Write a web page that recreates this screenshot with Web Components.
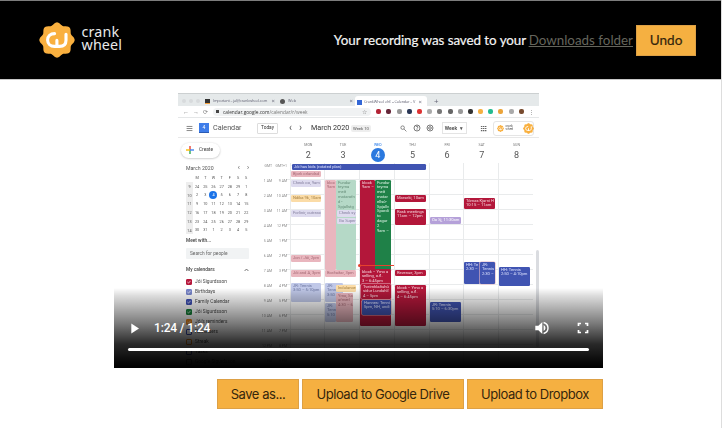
<!DOCTYPE html>
<html lang="en">
<head>
<meta charset="utf-8">
<title>CrankWheel recording</title>
<style>
html,body{margin:0;height:428px;overflow:hidden;background:#fff}
body{font-family:Lato,sans-serif}
</style>
</head>
<body>
<recording-page></recording-page>
<script>
const define=(name,html)=>customElements.define(name,class extends HTMLElement{
  connectedCallback(){
    if(this.shadowRoot)return;
    const r=this.attachShadow({mode:'open'});
    r.innerHTML=typeof html==='function'?html(this):html;
  }
});

/* Eight-lobed wheel outline */
const gear=(()=>{let d='';for(let i=0;i<=160;i++){const a=i/160*2*Math.PI,c=Math.cos(8*a);
  const r=16.4+1.25*c;d+=(i?'L':'M')+(18+r*Math.sin(a)).toFixed(2)+' '+(18-r*Math.cos(a)).toFixed(2);}return d+'Z';})();
const wheel=(s)=>`<svg width="${s}" height="${s}" viewBox="0 0 36 36"><path d="${gear}" fill="#f9b03f"/><path d="M15.6 11.6C11.4 11.7 8.6 14.4 8.6 18S11.5 24.4 15.5 24.4H20.5C24.8 24.4 27 22 27 18.3V12.2M17.9 18.4V24" fill="none" stroke="#fff" stroke-width="3.1" stroke-linecap="round" stroke-linejoin="round"/></svg>`;

define('brand-logo',`<style>:host{display:flex;align-items:center;gap:6.5px;color:#e9e9e9;margin-top:-1px}
 svg{display:block}.n{font:14.3px/12.6px "Noto Sans",sans-serif;letter-spacing:.15px;margin-top:-2px}.n span{display:block}</style>
 ${wheel(36)}<div class="n"><span>crank</span><span>wheel</span></div>`);

define('action-button',`<style>:host{display:flex;box-sizing:border-box;align-items:center;justify-content:center;background:#f5b041;border:1px solid #dda045;color:#35260c;font-size:14px;white-space:nowrap;height:30px;width:var(--w)}</style><slot></slot>`);

define('top-bar',`<style>:host{display:flex;box-sizing:border-box;height:80px;background:#000;border-top:1px solid #7c7c7c;border-bottom:1px solid #c8c8c8;align-items:center;justify-content:space-between;padding:0 25px 0 39px}
 .r{display:flex;align-items:center;color:#f4f4f4;font:13.4px/20px Lato,sans-serif;white-space:nowrap;-webkit-text-stroke:.2px}
 .r span{letter-spacing:-.05px}a{color:#65655c;text-decoration:underline;margin:0 3px 0 2.5px;-webkit-text-stroke:0}
 action-button{--w:60px;height:31px;font-size:13.6px}</style>
 <brand-logo></brand-logo><div class="r"><span>Your recording was saved to your</span><a>Downloads folder</a><action-button>Undo</action-button></div>`);

define('browser-tabs',`<style>:host{display:grid;grid-template-columns:27px 75px 77px 77px 1fr;height:13px;background:#e5e9ea;font:3.9px/12px "Open Sans",sans-serif;color:#667;border-top:1px solid #ccd0d1;box-sizing:border-box;white-space:nowrap}
 div{display:flex;align-items:center;gap:3px}i,.x{flex:none}.dots{padding-left:4px;gap:3px}.dots i{width:4px;height:4px;border-radius:50%;background:#d7dadc}
 .f{width:5px;height:5px;background:#333;border-bottom:1px solid #f7a13a;box-sizing:border-box}.g{width:5px;height:5px;border-radius:50%;background:#555}.c{background:#3367d6;border:0}.x{margin-left:auto;margin-right:4px;font-size:6px}.i{letter-spacing:-.18px}.i+.x{margin-right:5px}
 .on{background:#fff;border-radius:3px 3px 0 0;padding:0 0 0 2px;margin-top:2px;margin-left:-2px;width:72px;box-sizing:border-box;gap:2px}.p{font-size:8px}</style>
 <div class="dots"><i></i><i></i><i></i></div><div><i class="f"></i><span class="i">Important – jal@crankwheel.com</span><span class="x">×</span></div><div><i class="g"></i><span>Web</span><span class="x">×</span></div><div class="on"><i class="f c"></i><span class="i">CrankWheel ehf. – Calendar – V</span><span class="x">×</span></div><div class="p">+</div>`);

define('browser-bar',`<style>:host{display:flex;align-items:center;height:12px;padding:0 5px;font:4.8px/10px "Open Sans",sans-serif;color:#777;box-sizing:border-box;border-bottom:1px solid #e5e7e8;white-space:nowrap}
 .n{font-size:6px;width:25px;display:flex;justify-content:space-between;margin-right:5px}.u{background:#f0f2f3;height:8px;line-height:8px;border-radius:4px;flex:1;display:flex;align-items:center;padding:0 4px 0 3px;gap:4px;margin-right:5px}
 b{color:#333;font-weight:400}.u i{width:3px;height:3.5px;background:#444}.s{margin-left:auto;font-size:6px}
 .e{display:flex;gap:5.2px;align-items:center}.e i{width:5px;height:5px;border-radius:40%;background:var(--c)}</style>
 <div class="n"><span>←</span><span>→</span><span>⟳</span></div><div class="u"><i></i><span><b>calendar.google.com</b>/calendar/r/week</span><span class="s">☆</span></div>
 <div class="e">${['#b32335','#652638','#999','#293756','#d33','#aaa','#777','#666','#999','#333','#f5b041','#24bb91','#eba43a','#aaa','#784b2f'].map(c=>`<i style="--c:${c}"></i>`).join('')}<span>⋮</span></div>`);

const ic=(d,s=8)=>`<svg width="${s}" height="${s}" viewBox="0 0 24 24" fill="none" stroke="#666" stroke-width="2.6">${d}</svg>`;
define('calendar-header',`<style>:host{display:grid;grid-template-columns:21px 61px 27px 24px 42px 47px 41.5px 38px 13px 1fr;align-items:center;height:20px;box-sizing:border-box;border-bottom:1px solid #e8e8e8;font:7.2px/20px Roboto,sans-serif;color:#555;white-space:nowrap}
 svg{display:block;flex:none}div{display:flex;align-items:center}.m{padding-left:7.5px}.l{gap:4px}
 .t{border:1px solid #ddd;border-radius:1px;font-size:4.8px;line-height:10px;height:9px;width:19px;justify-content:center;color:#333;justify-self:start;margin-left:-3px}
 .a{gap:7px;font-size:10px;padding-left:2px}.mo{font-size:7.2px;color:#333}.w{background:#eee;border-radius:2px;font-size:4.2px;line-height:7px;justify-self:start;padding:0 2px;margin-left:-2px}
 .q{gap:5.5px}.k{border:1px solid #e4e4e4;width:23px;height:10px;font-size:5px;font-weight:700;justify-content:center;gap:3px}
 .b{border:1px solid #e5e5e5;border-radius:3px;height:15px;width:41px;gap:2px;font-size:3px;line-height:3px;box-sizing:border-box;padding-left:3px}.b svg:last-child{margin-left:8px}
 .lg{width:10px;height:10px;background:#3f7de9;border-bottom:1px solid #2b5bb4;box-sizing:border-box;color:#fff;font-size:5px;line-height:9px;justify-content:center}</style>
 <div class="m">${ic('<path d="M2 5H22M2 12H22M2 19H22"/>',7)}</div><div class="l"><div class="lg">4</div><span>Calendar</span></div><div class="t">Today</div><div class="a"><span>‹</span><span>›</span></div><div class="mo">March 2020</div><div class="w">Week 10</div>
 <div class="q">${ic('<circle cx="9" cy="9" r="6"/><path d="M14 14L22 22"/>',7)}${ic('<circle cx="12" cy="12" r="9"/><path d="M8.5 9C9 6 15 6 15 9S12 11 12 14M12 16V18"/>')}${ic('<circle cx="12" cy="12" r="9"/><circle cx="12" cy="12" r="4"/>')}</div>
 <div class="k">Week <span>▾</span></div><div>${ic('<path d="M3 5H8M10 5H15M17 5H22M3 12H8M10 12H15M17 12H22M3 19H8M10 19H15M17 19H22" stroke-width="4"/>',7)}</div><div class="b">${wheel(7)}<span>crank<br>wheel</span>${wheel(11)}</div>`);

define('mini-month',()=>{
 const rows=[['','M','T','W','T','F','S','S'],[9,24,25,26,27,28,29,1],[10,2,3,4,5,6,7,8],[11,9,10,11,12,13,14,15],[12,16,17,18,19,20,21,22],[13,23,24,25,26,27,28,29],[14,30,31,1,2,3,4,5]];
 return `<style>:host{display:block;font:3.8px/9px Roboto,sans-serif;color:#555}
 .h{display:flex;justify-content:space-between;font-size:5.2px;line-height:8px;height:9.5px;width:63px}.h div{display:flex;gap:7px;font-size:7px}
 .g{display:grid;grid-template-columns:7px repeat(7,8.2px);grid-auto-rows:8.75px;text-align:center;align-items:center}.g :nth-child(8n+1):not(:first-child){background:#eee;height:100%}
 .on{background:#1a73e8;color:#fff;border-radius:50%;width:8px;height:8px;line-height:8px;justify-self:center}</style>
 <div class="h"><span>March 2020</span><div><span>‹</span><span>›</span></div></div><div class="g">${rows.map((r,y)=>r.map((c,x)=>`<span${y==2&&x==3?' class="on"':''}>${c}</span>`).join('')).join('')}</div>`;});

define('calendar-side',()=>{
 const items=[['Jói Sigurdsson','#b6183c',1],['Birthdays','#7986cb',1],['Family Calendar','#3f51b5',1],['Jói Sigurdsson','#17843b',1],["Jói's reminders",'#ef8b20',1],['Reminders','#3f51b5',0],['Streak','#ef8b20',0],['Tasks','#3f51b5',0],['Google Sigurdsson','#777',0]];
 return `<style>:host{display:block;padding:4.5px 0 0 8px;font:4.8px/8px Roboto,sans-serif;color:#444;box-sizing:border-box;white-space:nowrap}
 .c{display:flex;align-items:center;gap:5px;width:39px;height:15px;box-sizing:border-box;border-radius:8px;box-shadow:0 .5px 2px #bbb;margin:0 0 6px -5px;padding-left:5px}
 .m{font-weight:500;margin-top:2.5px}.s{background:#f1f3f4;border-radius:1px;height:11px;line-height:11px;width:63px;padding-left:4px;box-sizing:border-box;margin-top:3px;color:#666}
 .h{display:flex;justify-content:space-between;width:63px;margin-top:7.5px;font-weight:500}.l{display:flex;gap:3.5px;height:10px;align-items:center}
 .l i{box-sizing:border-box;width:5.6px;height:5.6px;border:1px solid var(--c);border-radius:1px}.l i.on{background:var(--c)}svg{display:block}
 .ls{margin-top:2.5px}.up{margin-top:2px}</style>
 <div class="c"><svg width="8" height="8" viewBox="0 0 8 8"><path d="M4 0V4" stroke="#ea4335" stroke-width="1.4"/><path d="M4 4V8" stroke="#34a853" stroke-width="1.4"/><path d="M0 4H4" stroke="#fbbc04" stroke-width="1.4"/><path d="M4 4H8" stroke="#4285f4" stroke-width="1.4"/></svg>Create</div>
 <mini-month></mini-month><div class="m">Meet with...</div><div class="s">Search for people</div><div class="h"><span>My calendars</span><svg class="up" width="5" height="4" viewBox="0 0 5 4"><path d="M.6 3L2.5 1L4.4 3" fill="none" stroke="#555" stroke-width=".8"/></svg></div>
 <div class="ls">${items.map(([t,c,o])=>`<div class="l"><i class="${o?'on':''}" style="--c:${c}">${o?'<svg width="4" height="4" viewBox="0 0 4 4"><path d="M.4 2L1.5 3.1L3.6 .8" fill="none" stroke="#fff" stroke-width=".7"/></svg>':''}</i>${t}</div>`).join('')}</div>`;});

define('calendar-event',`<style>:host{display:block;box-sizing:border-box;overflow:hidden;border-radius:1.2px;padding:.6px 0 0 2px;font:4.1px/4.8px Roboto,sans-serif;white-space:nowrap;color:var(--ink,#fff);background:var(--c)}</style><slot></slot>`);

/* Event: left, top, width, height, colour key, text. The origin is the corner of the week grid. */
const C={r:['#b3173a','#f3d5dc'],g:['#1f8148','#dff5e7'],b:['#4054b2','#dfe4ff'],p:['#e9b6be','#a36873'],l:['#dedbef','#85809f'],o:['#fbdca7','#a27e42'],n:['#b5d9c7','#648c77'],v:['#b5a1d9','#fff'],u:['#c0c8e8','#69739d']};
const EV=[[25,1,134,6,'b','Jói has kids (rotated plan)'],[24,8,30,6,'p','Bjork orlandsd'],[24,17,30,7,'l','Check oo, 9am'],[24,32,30,7,'o','Ndika 9k, 10am'],[24,47,30,7,'l','Forlinir, outreac'],[24,92,30,7,'p','Jon / Jói, 2pm'],
[58,17,11,90,'p','bloc<br>9am'],[69,17,20,90,'n','Fundur<br>teyma<br>með<br>matarofn<br>d -<br>Spjallstg'],[70,47,19,7,'l','Check sy'],[70,55,19,6,'l','Go Super'],
[93,17,15,90,'r','block<br>9am –'],[108,17,16,90,'g','Fundur<br>teyma<br>með<br>matar<br>ellsú-<br>Spjallv<br>Spordi<br>to<br>dagur<br>2<br>9am –'],
[128,32,31,7,'r','Marseki, 10am'],[128,46,31,16,'r','Rask meetings<br>11am – 12pm'],[163,54,31,7,'v','Oo Sj, 11:30am'],[197,35,31,11,'r','Tómas Kjarni H<br>10:15 – 11am'],
[197,99,16,22,'b','HH: Te<br>2:30 –'],[213,99,15,22,'b','JR:<br>Tennis<br>2:30 –'],[232,104,31,19,'b','HH: Tennis<br>2:50 – 4:10pm'],
[24,107,30,7,'p','Jói and A, 3pm'],[58,107,31,7,'p','Borðaðar, 3pm'],[93,106,31,57,'r','block – Ymo a<br>selling, o.fl.<br>3 – 6:45pm'],[128,107,31,6,'r','Revenue, 3pm'],
[24,120,30,19,'u','JR: Tennis<br>3:50 – 5:10pm'],[58,120,18,19,'u','JR:<br>Tenn<br>3:50'],[69,122,20,7,'o','Indulance'],[58,140,11,19,'u','JR:<br>Tenn<br>5:10'],[69,130,17,29,'p','Ymo, Sa<br>afmæl<br>4:30 – 6'],
[94,121,30,15,'r','Tveimhlaðuhú<br>sidur Lundahlí<br>4 – 5pm'],[95,137,29,15,'b','Hannes: Tenni<br>5pm, NH, undi'],[128,122,31,41,'r','block – Ymo a<br>selling, o.fl.<br>4 – 6:45pm'],[163,139,31,20,'b','JR: Tennis<br>5:10 – 6:30pm']];
define('week-days',()=>`<style>:host{display:grid;grid-template-columns:24px repeat(7,34.7px);height:29px;padding-top:5px;box-sizing:border-box;text-align:center;font:3.6px/5px Roboto,sans-serif;color:#777}
 div{display:flex;flex-direction:column;align-items:center}b{font:9px/14px Roboto,sans-serif;color:#555;width:14px;height:14px;border-radius:50%}.on{color:#1a73e8}.on b{background:#2b79df;color:#fff}</style><i></i>${['MON','TUE','WED','THU','FRI','SAT','SUN'].map((d,i)=>`<div class="${i==2?'on':''}">${d}<b>${i+2}</b></div>`).join('')}`);
define('week-grid',()=>`<style>:host{display:grid;grid-template-columns:repeat(267,1px);grid-template-rows:repeat(207,1px)}
 .ln{background:#e9ebec}.now{background:#e6412d}.dot{background:#e6412d;border-radius:50%}calendar-event{z-index:1}.now,.dot{z-index:2}.edge{box-shadow:0 0 0 .6px #e8b8c4}</style>
 ${Array.from({length:12},(_,i)=>`<i class="ln" style="grid-area:${17+15*i}/20/span 1/span 247"></i>`).join('')}
 ${[24,58,93,128,163,197,232].map(x=>`<i class="ln" style="grid-area:1/${x}/span 207/span 1"></i>`).join('')}
 ${EV.map(([x,y,w,h,c,t])=>`<calendar-event class="${x>=94&&x<96||x==213?'edge':''}" style="grid-area:${y+1}/${x+1}/span ${h}/span ${w};--c:${C[c][0]};--ink:${C[c][1]}">${t}</calendar-event>`).join('')}
 <i class="now" style="grid-area:103/94/span 1/span 34"></i><i class="dot" style="grid-area:102/92/span 3/span 3"></i>`);
define('hour-labels',()=>`<style>:host{display:grid;grid-template-columns:12px 12px;column-gap:3px;grid-auto-rows:15px;font:3.5px/6px Roboto,sans-serif;color:#888;text-align:right;white-space:nowrap}</style>${[['GMT','GMT+1'],['1 AM','9 AM'],['2 AM','10 AM'],['3 AM','11 AM'],['4 AM','12 PM'],['5 AM','1 PM'],['6 AM','2 PM'],['7 AM','3 PM'],['8 AM','4 PM'],['9 AM','5 PM'],['10 AM','6 PM'],['11 AM','7 PM'],['12 PM','8 PM'],['1 PM','9 PM']].map(r=>r.map(t=>`<span>${t}</span>`).join('')).join('')}`);

define('calendar-screen',`<style>:host{display:flex;flex-direction:column;width:361px;height:275px;overflow:hidden;background:#fff;filter:blur(.3px)}
 .b{display:grid;grid-template-columns:89px 267px 4px;flex:1;min-height:0}.w{display:grid;grid-template-rows:25px 207px}
 .sb{width:3px;background:#dadce0;border-radius:2px;height:97px;margin:112px 0 0 2px}
 .body{display:grid;grid-template-columns:1fr}.body>*{grid-area:1/1}.hl{margin:0 0 0 -7px;justify-self:start}</style>
 <browser-tabs></browser-tabs><browser-bar></browser-bar><calendar-header></calendar-header>
 <div class="b"><calendar-side></calendar-side><div class="w"><week-days></week-days><div class="body"><week-grid></week-grid><hour-labels class="hl"></hour-labels></div></div><i class="sb"></i></div>`);

define('player-controls',`<style>:host{display:flex;flex-direction:column;justify-content:flex-end;box-sizing:border-box;padding:0 14px 17px;color:#fff;background:linear-gradient(to bottom,rgba(0,0,0,0) 0,rgba(0,0,0,.14) 8px,rgba(0,0,0,.53) 36px,rgba(0,0,0,.84) 56px,rgba(0,0,0,.97) 74px,#000 80px)}
 .r{display:flex;align-items:center;height:20px;margin-bottom:10px;font:500 12px/20px Roboto,sans-serif;letter-spacing:-.15px}svg{display:block}.p{margin:0 14px 0 3px}.v{margin-left:auto}.f{margin:0 0 0 28px}.bar{height:3px;border-radius:2px;background:#fff}</style>
 <div class="r"><svg class="p" width="9" height="11" viewBox="0 0 9 11"><path d="M.3 .4V10.4L8 5.4Z" fill="#fff"/></svg><span>1:24 / 1:24</span>
 <svg class="v" width="14" height="14" viewBox="0 0 14 14"><path d="M.3 4.7V9.3H3.4L7.3 13V1L3.4 4.7Z" fill="#fff"/><path d="M8.6 4.1Q10.5 5 10.5 7T8.6 9.9Z" fill="#fff"/><path d="M8.6 1.5Q13 2.8 13 7T8.6 12.5" fill="none" stroke="#fff" stroke-width="1.4"/></svg>
 <svg class="f" width="12" height="12" viewBox="0 0 12 12"><path d="M1.5 4V1.5H4M8 1.5H10.5V4M10.5 8V10.5H8M4 10.5H1.5V8" fill="none" stroke="#fff" stroke-width="1.7"/></svg></div><div class="bar"></div>`);

define('video-player',`<style>:host{display:block;position:relative;width:489px;height:275px;background:#fff}calendar-screen{margin:0 auto 0 64px}player-controls{position:absolute;left:0;right:0;bottom:0;height:80px}</style><calendar-screen></calendar-screen><player-controls></player-controls>`);

define('recording-page',`<style>:host{display:block;height:428px;box-sizing:border-box;border-right:1px solid #ddd;background:#fff}
 main{width:489px;margin:13px 0 0 114px}.a{display:flex;justify-content:flex-end;gap:3px;margin-top:11px;font-family:Inter,sans-serif}
 .a action-button{font-size:13px;letter-spacing:-.46px}</style>
 <top-bar></top-bar><main><video-player></video-player><div class="a"><action-button style="--w:82px">Save as...</action-button><action-button style="--w:162px">Upload to Google Drive</action-button><action-button style="--w:136px">Upload to Dropbox</action-button></div></main>`);
</script>
</body>
</html>
